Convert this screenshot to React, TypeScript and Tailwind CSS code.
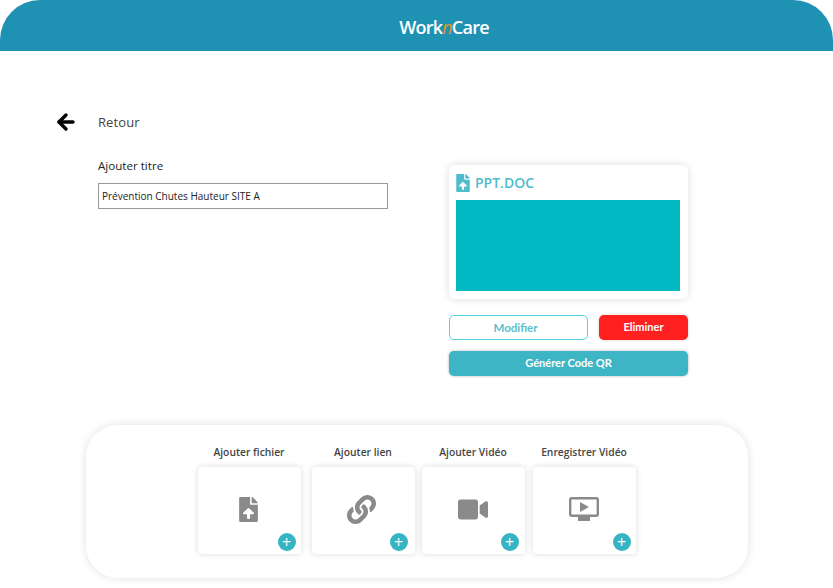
import React from "react";
import { ArrowLeft } from "lucide-react";
import { FaFileUpload, FaLink, FaVideo } from "react-icons/fa";

function ScreenIcon() {
  return (
    <svg width="30" height="25" viewBox="0 0 30 25" fill="none">
      <rect x="1.2" y="1.2" width="27.6" height="17.6" rx="1.5" stroke="#8a8a8a" strokeWidth="2.4" />
      <path d="M11 5 L20 10 L11 15 Z" fill="#8a8a8a" />
      <rect x="9" y="20" width="12" height="4" fill="#8a8a8a" />
    </svg>
  );
}

const actions = [
  { label: "Ajouter fichier", icon: <FaFileUpload className="mr-[2px] h-[25px] w-[19px] text-[#8a8a8a]" />, box: "mr-[11px]", plus: "right-[5px]" },
  { label: "Ajouter lien", icon: <FaLink className="mr-[4px] h-[29px] w-[29px] text-[#8a8a8a]" />, box: "mr-[7px]", plus: "right-[7px]" },
  { label: "Ajouter Vidéo", icon: <FaVideo className="h-[29px] w-[30px] text-[#8a8a8a]" />, box: "mr-[8px]", plus: "right-[6px]" },
  { label: "Enregistrer Vidéo", icon: <ScreenIcon />, box: "", plus: "right-[5px]" },
];

export default function App() {
  return (
    <div className="min-h-[588px] w-[833px] overflow-hidden bg-white font-['Open_Sans',sans-serif]">
      <header className="flex h-[51px] items-center justify-center rounded-t-[40px] bg-[#1f91b3] pl-[55px] pt-[4px]">
        <p className="text-[18px] font-semibold tracking-[-0.75px] text-white">
          Work<span className="font-normal italic text-[#e09a20]">n</span>Care
        </p>
      </header>

      <div className="flex items-start pt-[62px]">
        <div className="w-[449px] pl-[54px]">
          <div className="flex h-[18px] items-center">
            <ArrowLeft className="h-[24px] w-[24px] text-black" strokeWidth={3.4} />
            <span className="ml-[20px] pt-[1px] text-[13px] tracking-[0.1px] text-[#444]">Retour</span>
          </div>
          <div className="mt-[26px] pl-[44px]">
            <p className="text-[11.6px] font-medium leading-[18px] text-[#222]">Ajouter titre</p>
            <div className="mt-[8px] flex h-[26px] w-[290px] items-center border border-[#999] px-[3px] text-[10px] font-medium text-[#222]">
              Prévention Chutes Hauteur SITE A
            </div>
          </div>
        </div>

        <div className="mt-[52px] w-[239px]">
          <div className="rounded-[6px] bg-white pb-[8px] pl-[7px] pr-[8px] pt-[8px] shadow-[0_0_8px_rgba(0,0,0,0.14)]">
            <div className="flex h-[19px] items-center gap-[5px]">
              <FaFileUpload className="h-[18px] w-[14px] text-[#4dbccb]" />
              <span className="text-[14px] font-semibold text-[#4dbccb]">PPT.DOC</span>
            </div>
            <div className="mt-[8px] h-[91px] bg-[#02b9c3]" />
          </div>
          <div className="mt-[16px] flex justify-between">
            <button className="h-[25px] w-[139px] rounded-[5px] border border-[#4fd4e2] bg-white pr-[6px] font-['Lato',sans-serif] text-[11.5px] font-bold text-[#5cbfce]">
              Modifier
            </button>
            <button className="h-[25px] w-[89px] rounded-[5px] bg-[#ff2020] font-['Lato',sans-serif] text-[11px] font-bold text-white shadow-[0_0_3px_rgba(0,0,0,0.2)]">
              Eliminer
            </button>
          </div>
          <button className="mt-[11px] h-[25px] w-[239px] rounded-[5px] bg-[#3db5c5] font-['Lato',sans-serif] text-[11px] font-bold text-white shadow-[0_0_3px_rgba(0,0,0,0.3)]">
            Générer Code QR
          </button>
        </div>
      </div>

      <section className="ml-[86px] mt-[49px] flex h-[153px] w-[662px] justify-center rounded-[32px] bg-white pr-[1px] pt-[19px] shadow-[0_0_10px_rgba(0,0,0,0.12)]">
        {actions.map((a) => (
          <div key={a.label} className={a.box}>
            <p className="whitespace-nowrap text-center text-[10.3px] font-semibold leading-[16px] text-[#444]">{a.label}</p>
            <div className="relative mt-[7px] flex h-[87px] w-[103px] items-center justify-center rounded-[4px] bg-white pb-[2px] shadow-[0_0_6px_rgba(0,0,0,0.15)]">
              {a.icon}
              <span className={`absolute bottom-[3px] ${a.plus} flex h-[18px] w-[18px] items-center justify-center rounded-full bg-[#35b4c4] text-[16px] leading-none text-white`}>
                +
              </span>
            </div>
          </div>
        ))}
      </section>
    </div>
  );
}
